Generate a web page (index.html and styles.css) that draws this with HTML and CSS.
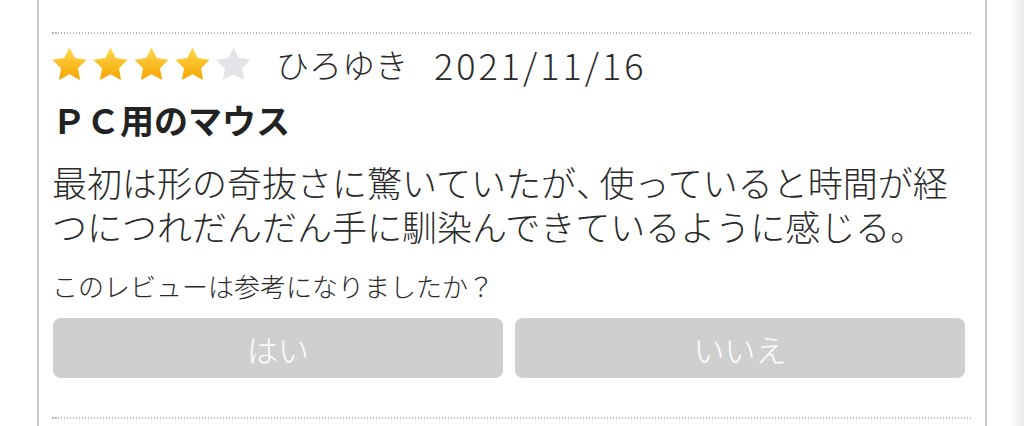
FILE: index.html
```html
<!DOCTYPE html>
<html lang="ja">
<head>
<meta charset="utf-8">
<title>レビュー</title>
<link rel="stylesheet" href="styles.css">
</head>
<body>
<svg class="defs" width="0" height="0" aria-hidden="true">
  <defs>
    <linearGradient id="gold" x1="0" y1="0" x2="0" y2="1">
      <stop offset="0" stop-color="#ffd94f"/>
      <stop offset="1" stop-color="#f6a400"/>
    </linearGradient>
  </defs>
</svg>
<div class="page">
  <div class="review">
    <div class="dots"></div>
    <div class="head">
      <div class="stars">
        <svg class="star" viewBox="0 0 24 24"><path class="on" d="M12 2l3.09 6.26L22 9.27l-5 4.87 1.18 6.88L12 17.77l-6.18 3.25L7 14.14 2 9.27l6.91-1.01L12 2z"/></svg>
        <svg class="star" viewBox="0 0 24 24"><path class="on" d="M12 2l3.09 6.26L22 9.27l-5 4.87 1.18 6.88L12 17.77l-6.18 3.25L7 14.14 2 9.27l6.91-1.01L12 2z"/></svg>
        <svg class="star" viewBox="0 0 24 24"><path class="on" d="M12 2l3.09 6.26L22 9.27l-5 4.87 1.18 6.88L12 17.77l-6.18 3.25L7 14.14 2 9.27l6.91-1.01L12 2z"/></svg>
        <svg class="star" viewBox="0 0 24 24"><path class="on" d="M12 2l3.09 6.26L22 9.27l-5 4.87 1.18 6.88L12 17.77l-6.18 3.25L7 14.14 2 9.27l6.91-1.01L12 2z"/></svg>
        <svg class="star" viewBox="0 0 24 24"><path class="off" d="M12 2l3.09 6.26L22 9.27l-5 4.87 1.18 6.88L12 17.77l-6.18 3.25L7 14.14 2 9.27l6.91-1.01L12 2z"/></svg>
      </div>
      <span class="name">ひろゆき</span>
      <span class="date">2021/11/16</span>
    </div>
    <h2 class="title">ＰＣ用のマウス</h2>
    <p class="body">最初は形の奇抜さに驚いていたが<span class="halt">、</span>使っていると時間が経つにつれだんだん手に馴染んできているように感じる。</p>
    <p class="ask">このレビューは参考になりましたか？</p>
    <div class="votes">
      <button class="vote">はい</button>
      <button class="vote">いいえ</button>
    </div>
    <div class="dots"></div>
  </div>
</div>
</body>
</html>
```
FILE: styles.css
```css
html {
  background: linear-gradient(to left, #ebebeb 0, #ffffff 15px);
  min-height: 100%;
}
body {
  margin: 0;
  font-family: "Noto Sans CJK JP", "Noto Sans", sans-serif;
  color: #333;
}
.defs {
  position: absolute;
  width: 0;
  height: 0;
}
.page {
  box-sizing: border-box;
  width: 950px;
  margin-left: 37px;
  min-height: 100vh;
  border-left: 2px solid #cacaca;
  border-right: 2px solid #cacaca;
  background: #fff;
  padding-top: 32px;
}
.review {
  margin: 0 13px;
}
.dots {
  height: 2px;
  background: repeating-linear-gradient(to right, #b8b8b8 0, #b8b8b8 1.5px, transparent 1.5px, transparent 3px);
}
.head {
  display: flex;
  align-items: center;
  height: 44px;
  margin-top: 8px;
}
.stars {
  display: flex;
  margin-left: -3px;
}
.star {
  width: 41px;
  height: 41px;
  display: block;
}
.on { fill: url(#gold); }
.off { fill: #e3e4e7; }
.name {
  margin-left: 22px;
  font-size: 33px;
  line-height: 44px;
  font-weight: 300;
  color: #2a2a2a;
}
.date {
  margin-left: 26px;
  font-size: 36px;
  line-height: 44px;
  letter-spacing: 3px;
  font-weight: 300;
  color: #2a2a2a;
}
.title {
  margin: 12px 0 0;
  font-size: 34px;
  line-height: 44px;
  font-weight: 700;
  color: #222;
}
.body {
  margin: 18px 0 0;
  font-size: 35px;
  line-height: 44px;
  font-weight: 300;
  color: #2a2a2a;
}
.halt {
  font-feature-settings: "halt";
  margin-right: 6px;
}
.ask {
  margin: 20px 0 0;
  font-size: 26px;
  line-height: 36px;
  font-weight: 300;
  color: #2a2a2a;
}
.votes {
  display: flex;
  gap: 12px;
  margin: 14px 0 0 1px;
}
.vote {
  width: 450px;
  height: 60px;
  border: none;
  border-radius: 8px;
  background: #cfcfcf;
  color: #fff;
  font-family: "Noto Sans CJK JP", "Noto Sans", sans-serif;
  font-size: 31px;
  font-weight: 300;
  padding: 0;
}
.votes + .dots {
  margin-top: 39px;
}
```
